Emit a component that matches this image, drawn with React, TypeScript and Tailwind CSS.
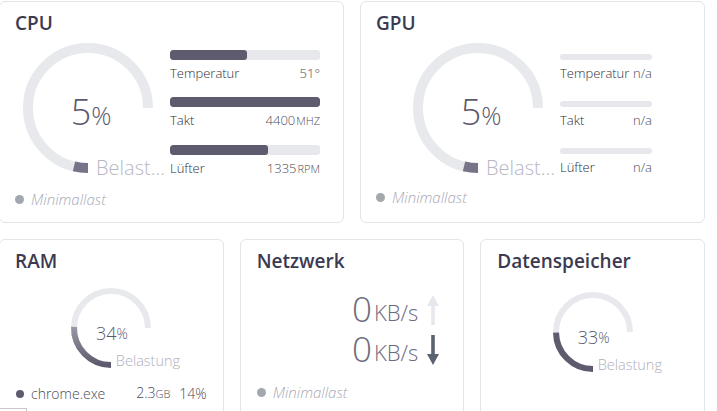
import React from "react";

const FONT = { fontFamily: '"Open Sans", "Noto Sans", "Liberation Sans", sans-serif' };

function arc(cx: number, cy: number, r: number, a0: number, a1: number) {
  const rad = (d: number) => (d * Math.PI) / 180;
  const x0 = cx + r * Math.cos(rad(a0));
  const y0 = cy + r * Math.sin(rad(a0));
  const x1 = cx + r * Math.cos(rad(a1));
  const y1 = cy + r * Math.sin(rad(a1));
  const large = a1 - a0 > 180 ? 1 : 0;
  return `M ${x0} ${y0} A ${r} ${r} 0 ${large} 1 ${x1} ${y1}`;
}

function Ring({ size, r, stroke, pct, color, gradId }: { size: number; r: number; stroke: number; pct: number; color: string; gradId?: string }) {
  const c = size / 2;
  const end = 90 + 270 * (pct / 100);
  return (
    <svg width={size} height={size} viewBox={`0 0 ${size} ${size}`} className="block">
      {gradId && (
        <defs>
          <linearGradient id={gradId} x1="0" y1="1" x2="0" y2="0">
            <stop offset="0" stopColor="#5d5a6d" />
            <stop offset="1" stopColor="#9a98a6" />
          </linearGradient>
        </defs>
      )}
      <path d={arc(c, c, r, 90, 360)} fill="none" stroke="#e7e9ec" strokeWidth={stroke} />
      <path d={arc(c, c, r, 90, end)} fill="none" stroke={gradId ? `url(#${gradId})` : color} strokeWidth={stroke} />
    </svg>
  );
}

function BigGauge({ pct }: { pct: number }) {
  return (
    <div className="relative w-[132px] h-[132px] shrink-0">
      <Ring size={132} r={60} stroke={10} pct={pct} color="#77748a" />
      <div className="absolute inset-0 flex items-center justify-center pt-[8px] pl-[6px] text-[#5a596c] font-light">
        <span className="text-[36px] leading-none">{pct}</span>
        <span className="text-[25px] leading-none mt-[6px]">%</span>
      </div>
      <div className="absolute left-[74px] top-[112px] w-[73px] truncate text-[20px] leading-[28px] font-light text-[#b7b7c3]">
        Belastung
      </div>
    </div>
  );
}

function SmallGauge({ pct, grad, id }: { pct: number; grad?: boolean; id: string }) {
  return (
    <div className="relative w-[82px] h-[82px]">
      <Ring size={82} r={37} stroke={6} pct={pct} color="#5f5b6e" gradId={grad ? id : undefined} />
      <div className="absolute inset-0 flex items-center justify-center pt-[10px] pl-[2px] text-[#5a596c] font-light">
        <span className="text-[18px] leading-none">{pct}</span>
        <span className="text-[14px] leading-none mt-[2px]">%</span>
      </div>
      <div className="absolute left-[46px] top-[64px] text-[14.5px] leading-[20px] font-light text-[#b0b0bc] whitespace-nowrap">
        Belastung
      </div>
    </div>
  );
}

type Bar = { label: string; pct: number; value: string; unit?: string };

function Bars({ items, width, barH }: { items: Bar[]; width: string; barH: number }) {
  return (
    <div className={`flex flex-col ${width}`}>
      {items.map((it, i) => (
        <div key={i} className={i === 0 ? "" : "mt-[14px]"}>
          <div className="h-[10px] flex items-end">
            <div className="w-full rounded-[3px] bg-[#e6e8eb] overflow-hidden" style={{ height: barH }}>
              <div className="h-full bg-[#5f5b6e] rounded-[3px]" style={{ width: `${it.pct}%` }} />
            </div>
          </div>
          <div className="mt-[3px] flex justify-between items-baseline leading-[20px] text-[13px] whitespace-nowrap font-light">
            <span className="text-[#2e2e36]">{it.label}</span>
            <span className="text-[#4d4d5a]">
              {it.value}
              {it.unit && <span className="text-[11px] uppercase ml-[1px]">{it.unit}</span>}
            </span>
          </div>
        </div>
      ))}
    </div>
  );
}

function Status({ text, dot = "bg-[#a3a8af]" }: { text: string; dot?: string }) {
  return (
    <div className="flex items-center leading-[20px]">
      <div className={`w-[9px] h-[9px] rounded-full ${dot}`} />
      <span className="ml-[7px] text-[15px] font-light text-[#a9a9b6] italic">{text}</span>
    </div>
  );
}

function Title({ children }: { children: React.ReactNode }) {
  return <div className="text-[19px] leading-[26px] font-semibold text-[#3b3a51]">{children}</div>;
}

export default function App() {
  return (
    <div className="w-[717px] h-[411px] overflow-hidden bg-white relative" style={FONT}>
      <div className="ml-[-1px] mt-px w-[706px] flex flex-col gap-4">
        <div className="grid grid-cols-2 gap-4">
          <div className="h-[222px] border border-[#e3e5e8] rounded-[6px] pl-[15px] pr-[16px] pt-[8px]">
            <Title>CPU</Title>
            <div className="mt-[6px] flex justify-center gap-4">
              <BigGauge pct={5} />
              <div className="pt-[8px]">
                <Bars
                  width="w-[150px]"
                  barH={10}
                  items={[
                    { label: "Temperatur", pct: 51, value: "51°" },
                    { label: "Takt", pct: 100, value: "4400", unit: "MHz" },
                    { label: "Lüfter", pct: 65, value: "1335", unit: "RPM" },
                  ]}
                />
              </div>
            </div>
            <div className="mt-[10px]">
              <Status text="Minimallast" />
            </div>
          </div>
          <div className="h-[222px] border border-[#e3e5e8] rounded-[6px] pl-[15px] pr-[16px] pt-[8px]">
            <Title>GPU</Title>
            <div className="mt-[6px] flex justify-center gap-4">
              <BigGauge pct={5} />
              <div className="pt-[8px]">
                <Bars
                  width="w-[92px]"
                  barH={6}
                  items={[
                    { label: "Temperatur", pct: 0, value: "n/a" },
                    { label: "Takt", pct: 0, value: "n/a" },
                    { label: "Lüfter", pct: 0, value: "n/a" },
                  ]}
                />
              </div>
            </div>
            <div className="mt-[10px]">
              <Status text="Minimallast" />
            </div>
          </div>
        </div>
        <div className="grid grid-cols-3 gap-4">
          <div className="h-[200px] border border-[#e3e5e8] rounded-[6px] pl-[15px] pr-[16px] pt-[8px]">
            <Title>RAM</Title>
            <div className="mt-[13px] flex justify-center">
              <SmallGauge pct={34} grad id="ramgrad" />
            </div>
            <div className="mt-[14px] flex items-center leading-[20px] text-[14px] font-light text-[#4a4a58] whitespace-nowrap">
              <div className="w-[8px] h-[8px] rounded-full bg-[#5f5b6e] ml-[1px]" />
              <span className="ml-[7px] flex-1">chrome.exe</span>
              <span>
                2.3<span className="text-[11px]">GB</span>
              </span>
              <span className="ml-[9px]">14%</span>
            </div>
          </div>
          <div className="h-[200px] border border-[#e3e5e8] rounded-[6px] pl-[16px] pr-[16px] pt-[8px]">
            <Title>Netzwerk</Title>
            <div className="mt-[15px] flex flex-col items-end pr-[8px] text-[#6b6a7d] font-light">
              <div className="flex items-end h-[40px]">
                <span className="text-[35px] leading-[40px]">0</span>
                <span className="text-[22px] leading-[34px] ml-[2px]">KB/s</span>
                <svg width="12" height="30" viewBox="0 0 12 30" className="ml-[9px] mb-[4px]">
                  <rect x="4.2" y="9" width="3.6" height="21" fill="#e6e8eb" />
                  <path d="M0 11 L6 0 L12 11 Z" fill="#e6e8eb" />
                </svg>
              </div>
              <div className="flex items-end h-[40px]">
                <span className="text-[35px] leading-[40px]">0</span>
                <span className="text-[22px] leading-[34px] ml-[2px]">KB/s</span>
                <svg width="12" height="30" viewBox="0 0 12 30" className="ml-[9px] mb-[4px]">
                  <rect x="4.2" y="0" width="3.6" height="21" fill="#5b6270" />
                  <path d="M0 19 L6 30 L12 19 Z" fill="#5b6270" />
                </svg>
              </div>
            </div>
            <div className="mt-[13px]">
              <Status text="Minimallast" />
            </div>
          </div>
          <div className="h-[200px] border border-[#e3e5e8] rounded-[6px] pl-[16px] pr-[16px] pt-[8px]">
            <Title>Datenspeicher</Title>
            <div className="mt-[17px] flex justify-center">
              <SmallGauge pct={33} id="dsgrad" />
            </div>
          </div>
        </div>
      </div>
      <div className="absolute left-0 top-[408px] w-[27px] h-[10px] border-t border-r border-[#c9c9c9] bg-white" />
    </div>
  );
}
